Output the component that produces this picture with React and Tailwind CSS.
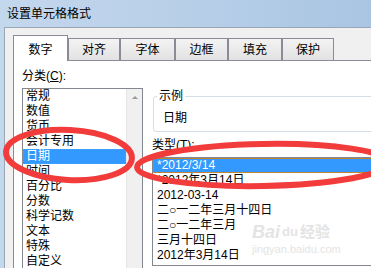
import React from 'react';

const font = { fontFamily: '"Liberation Sans", "Noto Sans CJK SC", sans-serif' };

const tabs = [
  { label: '数字', w: 'w-[55px]', active: true },
  { label: '对齐', w: 'w-[52px]' },
  { label: '字体', w: 'w-[55px]' },
  { label: '边框', w: 'w-[53px]' },
  { label: '填充', w: 'w-[54px]' },
  { label: '保护', w: 'w-[52px]' },
];

const categories = ['常规', '数值', '货币', '会计专用', '日期', '时间', '百分比', '分数', '科学记数', '文本', '特殊', '自定义'];

const types = ['*2012/3/14', '*2012年3月14日', '2012-03-14', '二○一二年三月十四日', '二○一二年三月', '三月十四日', '2012年3月14日'];

function Tab({ label, w, active }) {
  if (active) {
    return (
      <div className={`${w} h-[26px] -mb-px pt-[2px] flex items-center justify-center bg-white border border-b-0 border-[#898c95] relative z-10`}>
        {label}
      </div>
    );
  }
  return (
    <div className={`${w} h-[22px] flex items-center justify-center border border-b-0 border-[#898c95] bg-gradient-to-b from-[#f3f3f3] to-[#e2e2e2]`}>
      {label}
    </div>
  );
}

function CategoryList() {
  return (
    <div className="relative w-[121px] h-[200px] border border-[#828790] bg-white flex">
      <div className="flex-1">
        {categories.map((c, i) =>
          i === 4 ? (
            <div key={c} className="h-[15px] leading-[13px] pl-[2px] bg-[#3399ff] text-white border border-dotted border-[#c88a3a]">{c}</div>
          ) : (
            <div key={c} className="h-[15px] leading-[15px] pl-[3px]">{c}</div>
          )
        )}
      </div>
      <div className="w-[16px] bg-[#f0f0f0] border-l border-[#e6e6e6] flex flex-col">
        <div className="h-[17px] flex items-center justify-center">
          <div className="w-0 h-0 border-l-[3px] border-r-[3px] border-b-[3px] border-l-transparent border-r-transparent border-b-[#9a9a9a]" />
        </div>
      </div>
    </div>
  );
}

function TypeList() {
  return (
    <div className="w-[260px] h-[109px] border border-[#828790] bg-white">
      {types.map((t, i) =>
        i === 0 ? (
          <div key={t} className="h-[15px] leading-[13px] pl-[3px] bg-[#3399ff] text-white border border-dotted border-[#c88a3a]">{t}</div>
        ) : (
          <div key={t} className="h-[15px] leading-[15px] pl-[4px]">{t}</div>
        )
      )}
    </div>
  );
}

export default function App() {
  return (
    <div className="relative w-[371px] h-[268px] overflow-hidden text-[12px] text-black bg-gradient-to-r from-[#c3d7ed] via-[#b8cfe8] to-[#a9c5e3]" style={font}>
      <div className="h-[27px] flex items-center pl-[7px] pt-[1px]">设置单元格格式</div>
      <div className="ml-[4px] h-[241px] border-t border-l border-[#98a6b6] bg-[#f0f0f0] pl-[8px] pt-[7px]">
        <div className="flex items-end">
          {tabs.map((t) => (
            <Tab key={t.label} {...t} />
          ))}
        </div>
        <div className="w-[400px] h-[220px] bg-white border-t border-l border-[#898c95] pl-[8px] flex gap-[9px]">
          <div className="flex flex-col">
            <div className="mt-[8px] h-[15px] leading-[15px]">
              分类(<span className="underline">C</span>):
            </div>
            <div className="mt-[4px]">
              <CategoryList />
            </div>
          </div>
          <div className="flex flex-col">
            <div className="relative mt-[35px] ml-[1px] w-[260px] h-[36px] border border-[#d5dfe5] rounded-[3px] pl-[9px] pt-[14px] leading-[15px]">
              <span className="absolute -top-[8px] left-[3px] px-[2px] bg-white leading-[15px]">示例</span>
              日期
            </div>
            <div className="mt-[6px] h-[15px] leading-[15px]">
              类型(<span className="underline">T</span>):
            </div>
            <div className="mt-[4px]">
              <TypeList />
            </div>
          </div>
        </div>
      </div>

      <div className="absolute left-[252px] top-[222px] flex flex-col items-start text-[#e4e4e4] pointer-events-none">
        <div className="flex items-center gap-[2px] text-[18px] font-bold leading-[20px] italic">
          <span>Bai</span>
          <span className="text-[13px] not-italic">du</span>
          <span className="text-[15px] not-italic">经验</span>
        </div>
        <div className="text-[11px] leading-[13px] mt-[1px]">jingyan.baidu.com</div>
      </div>

      <svg className="absolute inset-0 pointer-events-none" width="371" height="268" viewBox="0 0 371 268">
        <ellipse cx="69" cy="155" rx="63" ry="25" fill="none" stroke="#f23c3c" strokeWidth="6" transform="rotate(3 69 155)" />
        <ellipse cx="263" cy="165" rx="126" ry="21" fill="none" stroke="#f23c3c" strokeWidth="6" transform="rotate(-1 263 165)" />
      </svg>
    </div>
  );
}
